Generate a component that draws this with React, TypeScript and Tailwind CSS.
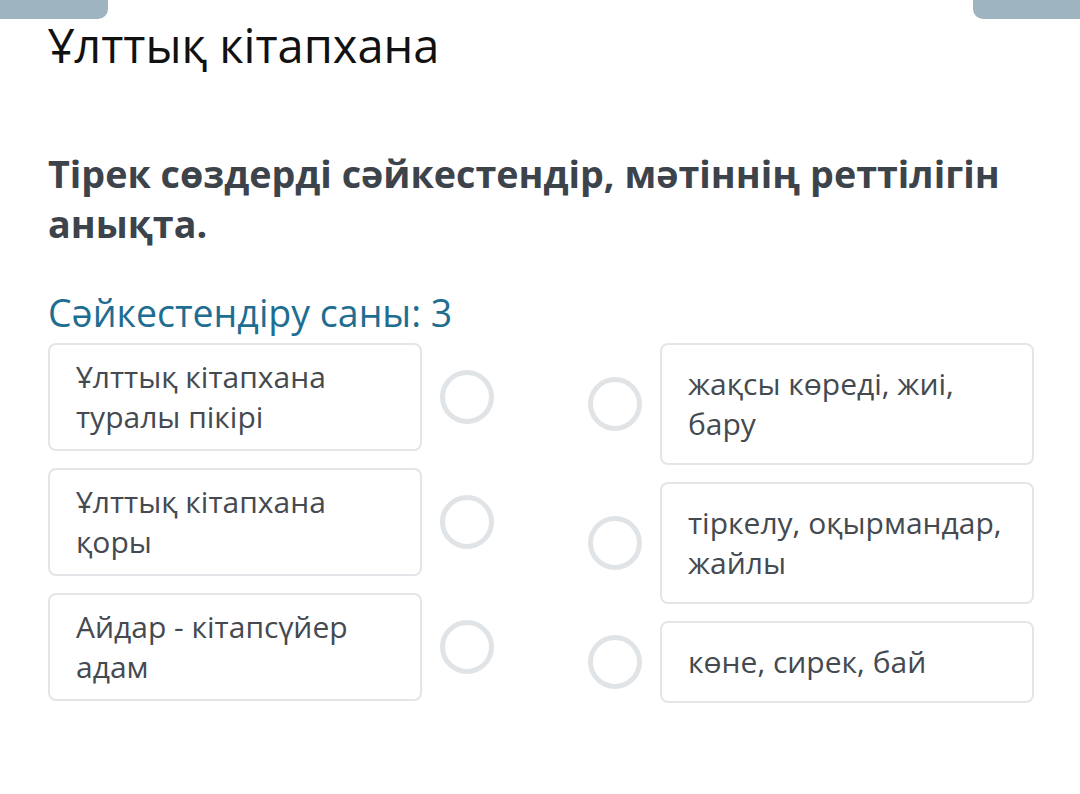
import React from "react";

const font = { fontFamily: '"Open Sans", "Noto Sans", sans-serif' };

function Circle() {
  return <div className="w-[54px] h-[54px] shrink-0 rounded-full border-[5px] border-[#e1e4e7] bg-white" />;
}

function LeftItem({ text }: { text: string[] }) {
  return (
    <div className="flex items-center gap-[18px]">
      <div className="w-[374px] h-[108px] rounded-[8px] border-2 border-[#e3e5e8] px-[26px] flex flex-col justify-center text-[30px] leading-[40px] text-[#444a50]">
        {text.map((t, i) => (
          <div key={i}>{t}</div>
        ))}
      </div>
      <Circle />
    </div>
  );
}

function RightItem({ text }: { text: string[] }) {
  return (
    <div className="flex items-center gap-[18px]">
      <Circle />
      <div className="w-[374px] rounded-[8px] border-2 border-[#e3e5e8] px-[26px] py-[19px] flex flex-col justify-center text-[30px] leading-[40px] text-[#444a50]">
        {text.map((t, i) => (
          <div key={i}>{t}</div>
        ))}
      </div>
    </div>
  );
}

export default function App() {
  return (
    <div className="relative w-[1080px] h-[794px] bg-white overflow-hidden" style={font}>
      <div className="absolute left-0 top-0 w-[108px] h-[19px] bg-[#9fb4c1] rounded-br-[10px]" />
      <div className="absolute right-0 top-0 w-[107px] h-[19px] bg-[#9fb4c1] rounded-bl-[10px]" />
      <div className="pl-[48px] pr-[46px] pt-[13px]">
        <h1 className="text-[47px] leading-[64px] text-[#111111] font-normal">Ұлттық кітапхана</h1>
        <h2 className="mt-[72px] text-[37.7px] leading-[50px] font-bold text-[#3c434b]">
          Тірек сөздерді сәйкестендір, мәтіннің реттілігін анықта.
        </h2>
        <div className="mt-[38px] text-[37.5px] leading-[52px] text-[#1e6e92]">Сәйкестендіру саны: 3</div>
        <div className="mt-[4px] flex justify-between">
          <div className="flex flex-col gap-[17px]">
            <LeftItem text={["Ұлттық кітапхана", "туралы пікірі"]} />
            <LeftItem text={["Ұлттық кітапхана", "қоры"]} />
            <LeftItem text={["Айдар - кітапсүйер", "адам"]} />
          </div>
          <div className="flex flex-col gap-[17px]">
            <RightItem text={["жақсы көреді, жиі,", "бару"]} />
            <RightItem text={["тіркелу, оқырмандар,", "жайлы"]} />
            <RightItem text={["көне, сирек, бай"]} />
          </div>
        </div>
      </div>
    </div>
  );
}
